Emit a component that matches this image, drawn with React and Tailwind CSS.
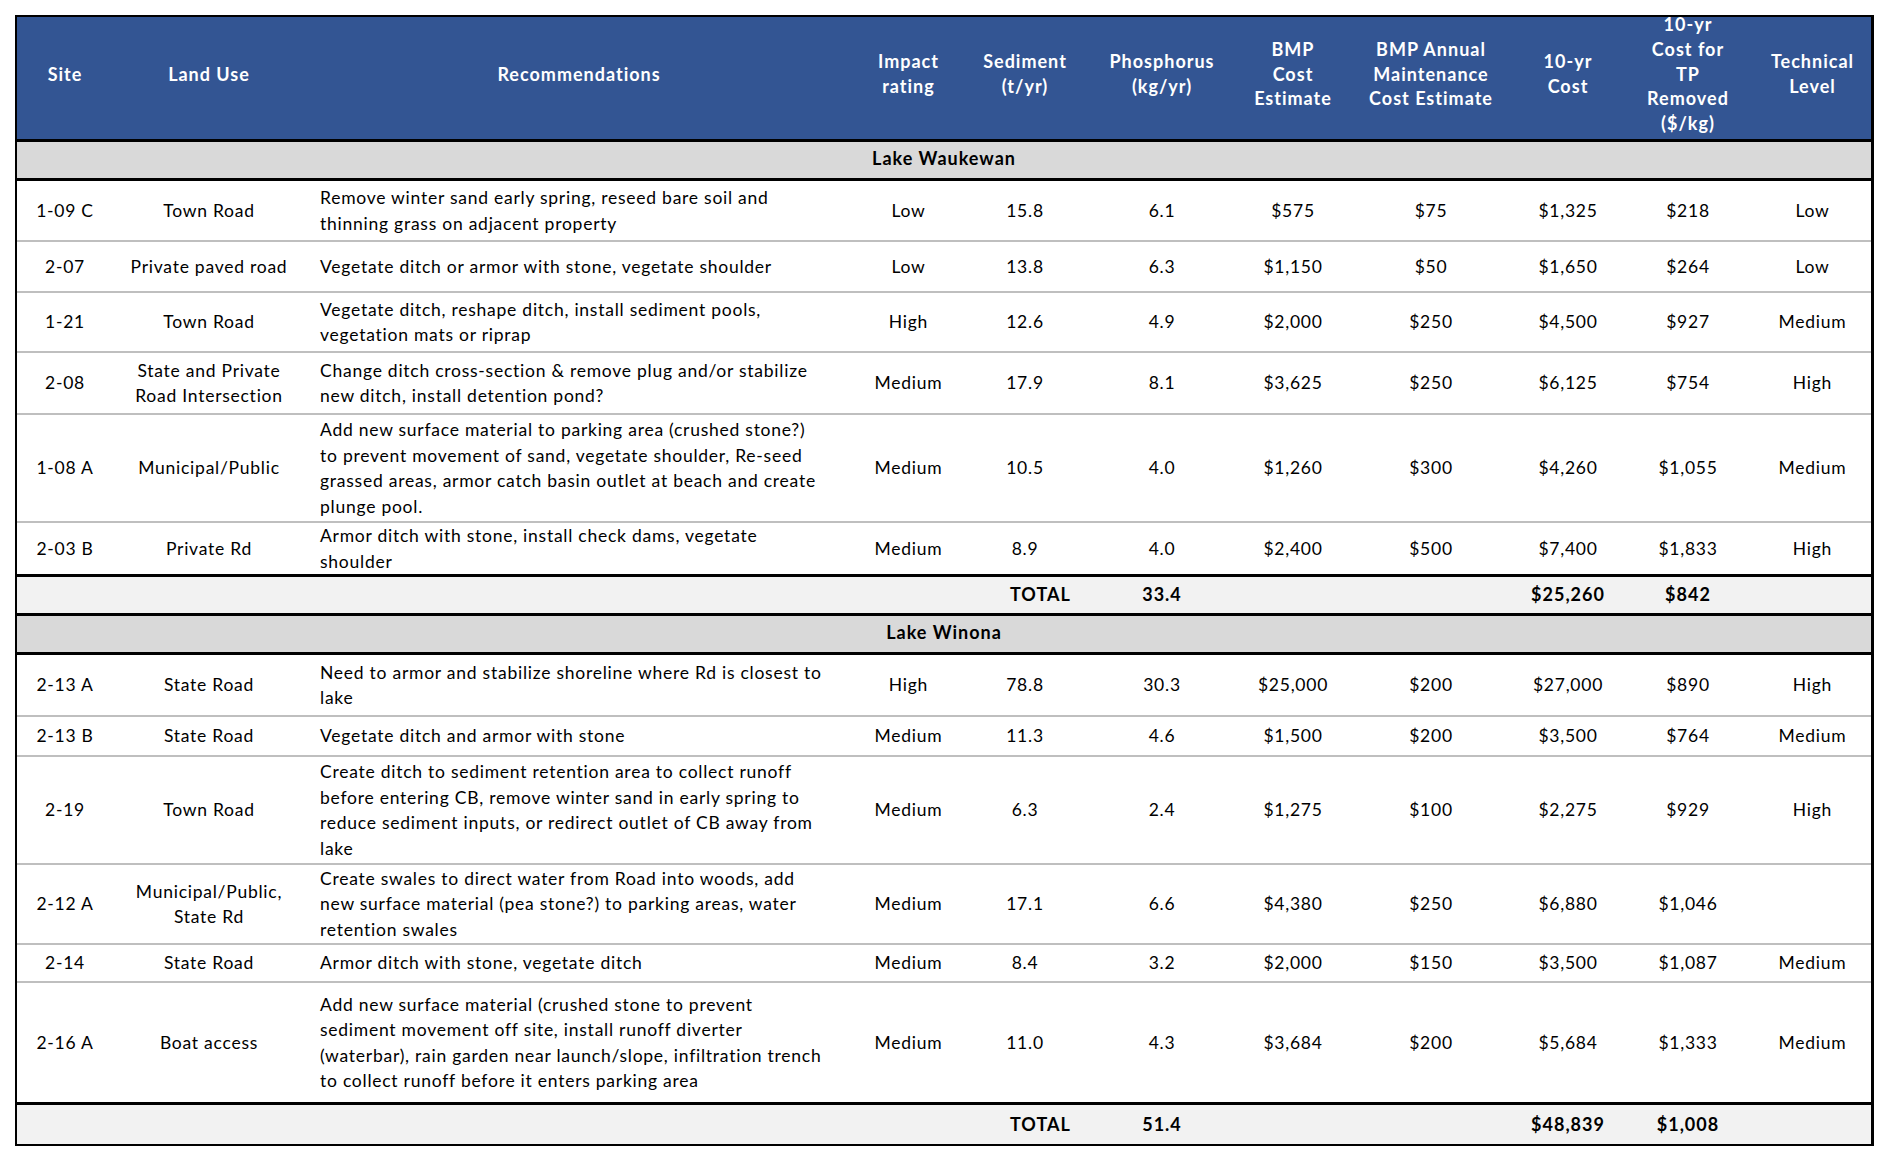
const cols =
  "grid grid-cols-[96px_192px_548px_111px_122px_152px_110px_166px_108px_132px_117px]";

const headers = [
  ["Site"],
  ["Land Use"],
  ["Recommendations"],
  ["Impact", "rating"],
  ["Sediment", "(t/yr)"],
  ["Phosphorus", "(kg/yr)"],
  ["BMP", "Cost", "Estimate"],
  ["BMP Annual", "Maintenance", "Cost Estimate"],
  ["10-yr", "Cost"],
  ["10-yr", "Cost for", "TP", "Removed", "($/kg)"],
  ["Technical", "Level"],
];

const waukewan = [
  {
    h: "h-[61px]",
    cells: [
      "1-09 C",
      ["Town Road"],
      ["Remove winter sand early spring, reseed bare soil and", "thinning grass on adjacent property"],
      "Low", "15.8", "6.1", "$575", "$75", "$1,325", "$218", "Low",
    ],
  },
  {
    h: "h-[51px]",
    cells: [
      "2-07",
      ["Private paved road"],
      ["Vegetate ditch or armor with stone, vegetate shoulder"],
      "Low", "13.8", "6.3", "$1,150", "$50", "$1,650", "$264", "Low",
    ],
  },
  {
    h: "h-[60px]",
    cells: [
      "1-21",
      ["Town Road"],
      ["Vegetate ditch, reshape ditch, install sediment pools,", "vegetation mats or riprap"],
      "High", "12.6", "4.9", "$2,000", "$250", "$4,500", "$927", "Medium",
    ],
  },
  {
    h: "h-[62px]",
    cells: [
      "2-08",
      ["State and Private", "Road Intersection"],
      ["Change ditch cross-section & remove plug and/or stabilize", "new ditch, install detention pond?"],
      "Medium", "17.9", "8.1", "$3,625", "$250", "$6,125", "$754", "High",
    ],
  },
  {
    h: "h-[108px]",
    cells: [
      "1-08 A",
      ["Municipal/Public"],
      [
        "Add new surface material to parking area (crushed stone?)",
        "to prevent movement of sand, vegetate shoulder, Re-seed",
        "grassed areas, armor catch basin outlet at beach and create",
        "plunge pool.",
      ],
      "Medium", "10.5", "4.0", "$1,260", "$300", "$4,260", "$1,055", "Medium",
    ],
  },
  {
    h: "h-[54px]",
    last: true,
    cells: [
      "2-03 B",
      ["Private Rd"],
      ["Armor ditch with stone, install check dams, vegetate", "shoulder"],
      "Medium", "8.9", "4.0", "$2,400", "$500", "$7,400", "$1,833", "High",
    ],
  },
];

const winona = [
  {
    h: "h-[62px]",
    cells: [
      "2-13 A",
      ["State Road"],
      ["Need to armor and stabilize shoreline where Rd is closest to", "lake"],
      "High", "78.8", "30.3", "$25,000", "$200", "$27,000", "$890", "High",
    ],
  },
  {
    h: "h-[40px]",
    cells: [
      "2-13 B",
      ["State Road"],
      ["Vegetate ditch and armor with stone"],
      "Medium", "11.3", "4.6", "$1,500", "$200", "$3,500", "$764", "Medium",
    ],
  },
  {
    h: "h-[108px]",
    cells: [
      "2-19",
      ["Town Road"],
      [
        "Create ditch to sediment retention area to collect runoff",
        "before entering CB, remove winter sand in early spring to",
        "reduce sediment inputs, or redirect outlet of CB away from",
        "lake",
      ],
      "Medium", "6.3", "2.4", "$1,275", "$100", "$2,275", "$929", "High",
    ],
  },
  {
    h: "h-[80px]",
    cells: [
      "2-12 A",
      ["Municipal/Public,", "State Rd"],
      [
        "Create swales to direct water from Road into woods, add",
        "new surface material (pea stone?) to parking areas, water",
        "retention swales",
      ],
      "Medium", "17.1", "6.6", "$4,380", "$250", "$6,880", "$1,046", "",
    ],
  },
  {
    h: "h-[38px]",
    cells: [
      "2-14",
      ["State Road"],
      ["Armor ditch with stone, vegetate ditch"],
      "Medium", "8.4", "3.2", "$2,000", "$150", "$3,500", "$1,087", "Medium",
    ],
  },
  {
    h: "h-[122px]",
    last: true,
    cells: [
      "2-16 A",
      ["Boat access"],
      [
        "Add new surface material (crushed stone to prevent",
        "sediment movement off site, install runoff diverter",
        "(waterbar), rain garden near launch/slope, infiltration trench",
        "to collect runoff before it enters parking area",
      ],
      "Medium", "11.0", "4.3", "$3,684", "$200", "$5,684", "$1,333", "Medium",
    ],
  },
];

function Lines({ lines }) {
  return lines.map((l, i) => (
    <span key={i} className="block whitespace-nowrap">
      {l}
    </span>
  ));
}

function DataRow({ row }) {
  const border = row.last
    ? "border-b-[3px] border-black"
    : "border-b-2 border-[#bfbfbf]";
  return (
    <div className={`${cols} ${row.h} ${border}`}>
      {row.cells.map((c, i) => (
        <div
          key={i}
          className={
            i === 2
              ? "flex flex-col justify-center px-[15px] text-left"
              : "flex flex-col justify-center items-center text-center"
          }
        >
          {Array.isArray(c) ? <Lines lines={c} /> : <span>{c}</span>}
        </div>
      ))}
    </div>
  );
}

function GroupBand({ name }) {
  return (
    <div className="h-[39px] pb-[2px] bg-[#d9d9d9] border-b-[3px] border-black flex items-center justify-center font-bold text-[18px] tracking-[1px]">
      {name}
    </div>
  );
}

function TotalRow({ phos, cost, perKg, last }) {
  return (
    <div
      className={`${cols} h-[39px] bg-[#f2f2f2] font-bold text-[18px] tracking-[1px] items-center ${
        last ? "" : "border-b-[3px] border-black"
      }`}
    >
      <div />
      <div />
      <div />
      <div />
      <div className="pl-[46px]">TOTAL</div>
      <div className="text-center">{phos}</div>
      <div />
      <div />
      <div className="text-center">{cost}</div>
      <div className="text-center">{perKg}</div>
      <div />
    </div>
  );
}

export default function App() {
  return (
    <div className="min-h-screen bg-white pt-[15px] pl-[15px] font-['Lato',sans-serif] text-[17.5px] tracking-[0.75px] leading-[25.5px] text-black">
      <div className="w-[1859px] border-l-2 border-t-2 border-r-[3px] border-b-2 border-black">
        {/* Header */}
        <div
          className={`${cols} grid-rows-[114px] h-[125px] bg-[#335593] border-b-[3px] border-black text-white font-bold text-[18px] tracking-[1px] leading-[24.8px]`}
        >
          {headers.map((h, i) => (
            <div
              key={i}
              className="flex flex-col justify-center items-center text-center"
            >
              <Lines lines={h} />
            </div>
          ))}
        </div>

        <GroupBand name="Lake Waukewan" />
        {waukewan.map((r, i) => (
          <DataRow key={i} row={r} />
        ))}
        <TotalRow phos="33.4" cost="$25,260" perKg="$842" />

        <GroupBand name="Lake Winona" />
        {winona.map((r, i) => (
          <DataRow key={i} row={r} />
        ))}
        <TotalRow phos="51.4" cost="$48,839" perKg="$1,008" last />
      </div>
    </div>
  );
}
